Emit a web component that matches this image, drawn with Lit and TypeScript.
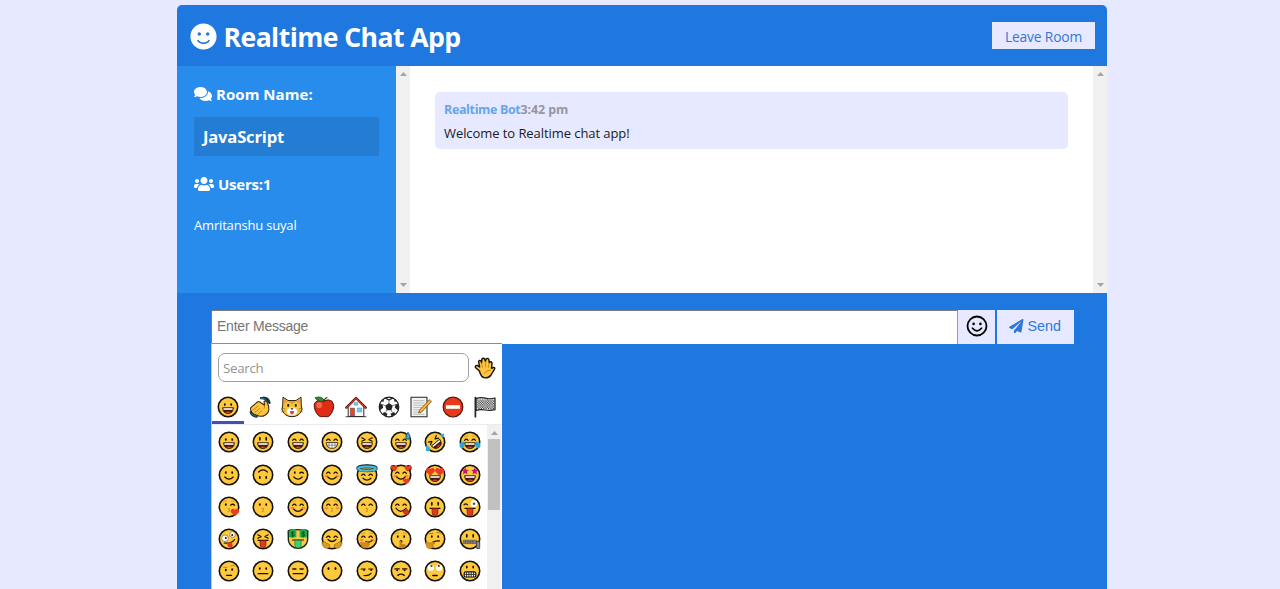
import { LitElement, html, css, svg } from "lit";
import { customElement, property } from "lit/decorators.js";

const K = "#1a1208";
const line = (d: string, color = K, w = 1.2) =>
  svg`<path d=${d} fill="none" stroke=${color} stroke-width=${w} stroke-linecap="round" stroke-linejoin="round"/>`;
const fill = (d: string, color: string, stroke = "none", w = 1) =>
  svg`<path d=${d} fill=${color} stroke=${stroke} stroke-width=${w} stroke-linejoin="round"/>`;
const dot = (x: number, y: number, r: number, color = K) => svg`<circle cx=${x} cy=${y} r=${r} fill=${color}/>`;
const oval = (x: number, y: number, rx: number, ry: number, color = K) =>
  svg`<ellipse cx=${x} cy=${y} rx=${rx} ry=${ry} fill=${color}/>`;

const base = svg`<circle cx="11" cy="11" r="9.7" fill="#fec93c" stroke="#15120c" stroke-width="1.6"/>`;
const eyes = svg`${oval(7.8, 8.6, 0.9, 1.3)}${oval(14.2, 8.6, 0.9, 1.3)}`;
const tall = svg`${oval(7.8, 7.8, 0.9, 2.1)}${oval(14.2, 7.8, 0.9, 2.1)}`;
const happy = line("M5.6 9.3Q7.4 6.9 9.1 9.3M12.9 9.3Q14.6 6.9 16.4 9.3");
const smile = line("M6.8 13Q11 17.2 15.2 13");
const grin = svg`${fill("M5.6 11.8H16.4Q16 17.5 11 17.5T5.6 11.8Z", "#4a1712", K, 0.8)}${fill("M6.4 12.2H15.6V13.8H6.4Z", "#fff")}${fill("M8.2 16.2Q11 14.6 13.8 16.2Q11 17.7 8.2 16.2Z", "#e6432c")}`;
const blush = svg`${oval(5.5, 12.2, 1.9, 1.4, "#f58d4f")}${oval(16.5, 12.2, 1.9, 1.4, "#f58d4f")}`;
const squint = line("M5.8 6.8L9 8.6L5.8 10.2M16.2 6.8L13 8.6L16.2 10.2");
const wink = svg`${oval(7.8, 8.6, 0.9, 1.3)}${line("M12.6 9.2Q14.6 7.3 16.6 9.2")}`;
const tongue = svg`${line("M6 12.4H16")}${fill("M8 12.6H14V16.4Q14 19.6 11 19.6T8 16.4Z", "#e5391f", "#5b1710", 0.6)}`;
const heart = (x: number, y: number, s: number) =>
  svg`<path transform="translate(${x} ${y}) scale(${s})" d="M0 3.2L-3.2 0C-4.2-2-1.5-4 0-1.7C1.5-4 4.2-2 3.2 0Z" fill="#ea3b23"/>`;
const star = (x: number, y: number) =>
  svg`<path transform="translate(${x} ${y})" d="M0-3.6L1-1.2L3.6-1L1.6.8L2.3 3.4L0 2L-2.3 3.4L-1.6.8L-3.6-1L-1-1.2Z" fill="#c4127e"/>`;
const kiss = line("M10.2 12.3Q12.9 12.4 11 13.8Q12.9 14.8 10.2 15.7", "#c07a22", 0.9);
const brows = line("M5.4 5.8Q7 4.3 8.8 4.9M13.2 4.9Q15 4.3 16.6 5.8", "#d08f22", 0.8);

const faces: Record<string, unknown> = {
  grinning: svg`${base}${eyes}${grin}`,
  smiley: svg`${base}${tall}${grin}`,
  smile: svg`${base}${happy}${grin}`,
  beaming: svg`${base}${happy}${fill("M5.3 11.6H16.7Q16.5 17.4 11 17.4T5.3 11.6Z", "#fff", K, 0.8)}${line("M5.8 14.2H16.2M8 12V16.5M11 12V17M14 12V16.5", "#555", 0.6)}`,
  laughing: svg`${base}${squint}${grin}`,
  sweat: svg`${base}${happy}${grin}${fill("M18 1.2Q14.8 5 16 7.3Q18 9.3 20 7.3Q21 5 18 1.2Z", "#31a9d8", "#173846", 0.7)}`,
  rofl: svg`${base}<g transform="rotate(-40 11 11)">${squint}${grin}</g>${fill("M16.2 3.2L20 2.4L20.2 6Q18 7.2 16.2 3.2Z", "#35afd6")}${fill("M2 14.6Q6.4 15.4 6.3 19Q4.4 21 1.8 19.8Z", "#35afd6")}`,
  joy: svg`${base}${brows}${happy}${grin}${fill("M5.2 10.6Q.2 11 .5 15.2Q1.7 18.3 4.6 16.5Q6 14 5.2 10.6ZM16.8 10.6Q21.8 11 21.5 15.2Q20.3 18.3 17.4 16.5Q16 14 16.8 10.6Z", "#2fa5cf")}`,
  slight: svg`${base}${eyes}${smile}`,
  upside: svg`${base}${line("M6.6 8Q11 3.8 15.4 8")}${oval(7.8, 13.4, 0.9, 1.7)}${oval(14.2, 13.4, 0.9, 1.7)}`,
  wink: svg`${base}${brows}${wink}${smile}`,
  blush: svg`${base}${blush}${happy}${smile}`,
  halo: svg`${base}${line("M5.6 11.3Q7.4 8.9 9.1 11.3M12.9 11.3Q14.6 8.9 16.4 11.3")}${line("M7 14.2Q11 18 15 14.2")}<ellipse cx="11" cy="4.2" rx="9" ry="2.2" fill="#fec93c" stroke="#173846" stroke-width="3.6"/><ellipse cx="11" cy="4.6" rx="8.9" ry="2.1" fill="none" stroke="#4cbbd8" stroke-width="2.2"/>`,
  hearts: svg`${base}${blush}${happy}${smile}${dot(3.4, 4, 3)}${dot(18.6, 4, 3)}${heart(4.1, 4.2, 1)}${heart(17.9, 4.2, 1)}${heart(16.4, 17, 1.05)}`,
  heartEyes: svg`${base}${grin}${heart(6.3, 7.6, 1.35)}${heart(15.7, 7.6, 1.35)}`,
  stars: svg`${base}${grin}${star(6.2, 7)}${star(15.8, 7)}`,
  blowing: svg`${base}${brows}${wink}${kiss}${heart(17, 16.2, 1.25)}`,
  kissing: svg`${base}${eyes}${kiss}`,
  relaxed: svg`${base}${brows}${blush}${happy}${line("M6.8 13.2Q11 17.6 15.2 13.2", K, 1.3)}`,
  kissClosed: svg`${base}${brows}${blush}${happy}${kiss}`,
  kissSmile: svg`${base}${happy}${kiss}`,
  yum: svg`${base}${happy}${line("M6 12.2Q10.5 18.5 16.2 12.2")}${fill("M13 14.4L17.7 13.6Q20.4 17.5 17.2 19Q13.6 19 13 14.4Z", "#dd3321", "#6b150e", 0.5)}`,
  tongue: svg`${base}${tall}${tongue}`,
  winkTongue: svg`${base}${line("M5 8.8Q6.8 6.8 8.5 8.8")}<circle cx="15" cy="7.6" r="3.4" fill="#fff"/>${dot(15, 7.7, 1.3, "#296070")}${tongue}`,
  zany: svg`${base}<circle cx="7" cy="10.3" r="3.3" fill="#fff" stroke="#7b5414" stroke-width=".6"/><circle cx="14.5" cy="6.5" r="2.8" fill="#fff" stroke="#7b5414" stroke-width=".6"/>${dot(7.8, 10, 1)}${dot(14.2, 7, 1)}${line("M6.2 15Q12.8 16 16.6 11.6")}${fill("M9 15.2L14 13.9Q15.8 19 12.7 19.8Q9.7 20 9 15.2Z", "#e33a20")}`,
  squintTongue: svg`${base}${squint}${tongue}`,
  money: svg`<path d="M1.2 3Q3.5 1.2 6.3 2.2Q11 1 15.7 2.2Q18.5 1.2 20.8 3L20.6 12.5A9.7 9.2 0 0 1 1.4 12.5Z" fill="#fec93c" stroke="#122b17" stroke-width="1.4"/>${fill("M2 3Q6-.2 9.4 3V9Q5.6 10.6 2 9ZM12.6 3Q16-.2 20 3V9Q16.4 10.6 12.6 9Z", "#19b34d")}${line("M7.2 4.2H4.4V6H7V8H4M5.6 3.2V9M17.8 4.2H15V6H17.6V8H14.6M16.2 3.2V9", "#064c20", 0.8)}${line("M5.5 12H16.5")}${fill("M7.8 12.4H14.2V17Q14 20 11 20T7.8 17Z", "#36d375", "#0a672d", 0.5)}`,
  hug: svg`${base}${happy}${line("M7 11.5Q11 15.5 15 11.5")}${fill("M.8 14.5Q3.5 12.7 6 15.4L8.6 16.5Q9.5 19.8 6 20.5Q1.4 20 .8 14.5ZM21.2 14.5Q18.5 12.7 16 15.4L13.4 16.5Q12.5 19.8 16 20.5Q20.6 20 21.2 14.5Z", "#dd9a22", "#7d5210", 0.5)}`,
  giggle: svg`${base}${blush}${brows}${happy}${line("M10 13.4Q14 15 16 12.5")}${fill("M4.5 14.2L8 15L12.6 12.8L11.6 15.2L13.7 15.7Q12.2 20.2 8 20.2Q4.5 19 4.5 14.2Z", "#d38b1d", "#9d6210", 0.4)}`,
  shush: svg`${base}${brows}${eyes}${oval(11, 13.5, 1.4, 1.5)}${fill("M9.9 13L11.3 12.4L12 15.8L15.8 16.5Q16 20 12 20.4L9.2 19Z", "#c6831d")}`,
  thinking: svg`${base}${eyes}${line("M5.5 5.8L9 5.2M12.8 4.6Q15 3.8 16.5 5.2", "#a4680f", 0.9)}${line("M9 14Q12 12.6 15.5 12.9")}${fill("M1.8 14.3Q3.5 12.8 4.8 15.2L10.7 14.2L10.5 15.8L7.8 16.8L9.8 18Q8.8 20.8 5 20.7Q1.8 19.7 1.8 14.3Z", "#d9941f", "#94610f", 0.5)}`,
  zipper: svg`${base}${tall}${fill("M4.2 12.2H17.7V15.6H4.2Z", "#99948a", "#4b4948", 0.6)}${line("M5 13.9H17M6.5 12.4V15.4M9 12.4V15.4M11.5 12.4V15.4M14 12.4V15.4", "#444", 0.6)}${fill("M17.2 13.5H20.7V20.5H17.8Z", "#8d8d8d", "#333", 0.8)}`,
  raised: svg`${base}${line("M5.5 7.4H9M12.8 6Q15 4.3 16.8 6", "#c98820", 1)}${oval(7.8, 10, 1, 1.2)}${oval(14.2, 9.5, 1, 1.2)}${line("M8.5 15.3H13.6")}`,
  neutral: svg`${base}${eyes}${line("M6.2 13.7H15.8", K, 1.3)}`,
  expressionless: svg`${base}${line("M5.8 9H9M13 9H16.2M6.2 13.7H15.8", K, 1.3)}`,
  noMouth: svg`${base}${oval(7.5, 8.6, 1, 1.5)}${oval(14.5, 8.6, 1, 1.5)}`,
  smirk: svg`${base}${line("M5.2 9H9.2M12.8 9H16.8M8 15.5Q12.8 16 15 13.3")}${dot(8, 10, 1)}${dot(15.2, 10, 1)}`,
  unamused: svg`${base}${line("M5 8.9H9.2M12.6 8.9H16.8M7.8 15.4Q11 12.8 14.2 15.4", K, 1.4)}${dot(7.2, 10.2, 1)}${dot(14.6, 10.2, 1)}`,
  rolling: svg`${base}<circle cx="6.8" cy="7.8" r="3.2" fill="#fff"/><circle cx="15.2" cy="7.8" r="3.2" fill="#fff"/>${dot(7.5, 5.9, 1.1, "#6b4a25")}${dot(14.8, 5.9, 1.1, "#6b4a25")}${line("M8.8 15.6H13.2", K, 1.5)}`,
  grimace: svg`${base}${oval(7.8, 7.1, 0.9, 1.5)}${oval(14.2, 7.1, 0.9, 1.5)}<rect x="5.2" y="11.8" width="11.6" height="5.2" rx="1.5" fill="#fff" stroke="#15120c" stroke-width="1.2"/>${line("M5.5 14.4H16.5M7.6 12V16.8M9.9 12V16.8M12.2 12V16.8M14.5 12V16.8", "#222", 0.9)}`,
  clap: svg`${line("M12 2.2Q16 1.4 19 6.2M14.6 1.6Q19.4 1.6 20.6 7", "#17353f", 2.2)}${line("M1.8 16.2Q3 20 7.6 20.6", "#17353f", 2.4)}${line("M12.4 2.3Q16 1.8 18.6 6", "#2f8296", 0.9)}${line("M2.2 17Q3.6 19.8 7 20.2", "#2f8296", 0.9)}${fill("M1.8 11.6L8.4 6Q9.6 5 10.8 6L15.6 9.2L15 5.6Q17.4 3.6 18.6 7.4Q21 12.4 19 16.4Q15.8 21 10.8 20.2Q6 19.6 3 16.6Q.8 13.4 1.8 11.6Z", "#fec640", "#3d2b0c", 1.1)}${line("M4 14L9 10M5.8 16.6L10.8 12.4M8.6 18.4L12.8 14.8M15.4 9.6Q16.2 11.4 15 12.6", "#b87818", 0.9)}`,
  cat: svg`${fill("M2 1.2L7 4.5H15L20 1.2L20.3 10L21 14Q18.2 20.7 11 20.7T1 14L1.7 10Z", "#fdc23c", "#2b2110", 1)}${fill("M3.1 3.5L6.2 5.6L3.5 8ZM18.9 3.5L15.8 5.6L18.5 8Z", "#f28b54")}${oval(7.2, 9.4, 1, 1.4)}${oval(14.8, 9.4, 1, 1.4)}${oval(11, 15.5, 5.2, 4, "#fff")}${fill("M9.5 12.3H12.5L11 14Z", K)}${fill("M9 15H13Q13 18.5 11 18.5T9 15Z", "#db4b36")}${line("M0 12L4 13M22 12L18 13M.5 16L4 15M21.5 16L18 15M11 5V8M9 5V6.5M13 5V6.5", "#7f5f23", 0.6)}`,
  apple: svg`${fill("M10.8 5.2Q15.5 2.3 19 5.3Q22 9 20 14Q17 21.8 12.8 20.7Q11 20 9.2 20.7Q5 21.5 2 14Q0 8.2 3 5.6Q6.8 3 10.8 5.2Z", "#df2d15", "#571108", 1)}${oval(6.2, 9.2, 2.8, 3, "#f46b51")}${fill("M2 1.8Q8.5-.7 12 4.9Q5 6.6 2 1.8Z", "#318b32", "#174d20", 0.8)}${line("M10.8 5.7Q11.2 2.5 14 1.5", "#493010", 1.1)}`,
  house: svg`${fill("M3.2 10L11 2.5L18.8 10V20.5H3.2Z", "#fff", "#303030", 1)}${line("M1.4 11.6L11 2L20.6 11.6", "#291713", 2.4)}${line("M1.8 11.4L11 2.2L20.2 11.4", "#df321f", 1.4)}${fill("M9.2 6.4H12.8V9.2H9.2ZM12.2 12H16.8V16H12.2Z", "#6fd0e8", "#4795ad", 0.5)}${fill("M5.4 12.2H9.4V20.3H5.4Z", "#e9452e", "#57302a", 0.6)}${line("M1 20.7H21", "#343434", 0.9)}`,
  soccer: svg`<circle cx="11" cy="11" r="9.8" fill="#fff" stroke="#191919" stroke-width="1.2"/>${fill("M11 7L14.8 9.8L13.3 14.2H8.7L7.2 9.8ZM7.8 1.6L11 3.2L14.2 1.6L15.1 2.5L11 4.8L6.9 2.5ZM1.4 8L4.5 8.2L5.2 11.8L2 14.2ZM20.6 8L17.5 8.2L16.8 11.8L20 14.2ZM6 16L9.5 17.7L8.5 20.6L4.4 18.3ZM16 16L12.5 17.7L13.5 20.6L17.6 18.3ZM3 5L6 3L5.5 6ZM19 5L16 3L16.5 6Z", "#252525")}${line("M11 7V4M14.8 9.8L17.5 8.5M13.3 14.2L14.5 17M8.7 14.2L7.5 17M7.2 9.8L4.5 8.5", "#555", 0.7)}`,
  memo: svg`${fill("M1 1.2H17V20.7H1Z", "#f4f4f2", "#272727", 1.1)}${line("M3.6 4.7H14.2M3.6 7H14.2M3.6 9.3H14.2M3.6 11.6H12M3.6 13.9H10M3.6 16.2H10M3.6 18.3H14.2", "#9da0a2", 0.7)}${fill("M9.6 14.2L19.3 3.8L21.4 5.6L11.7 16L8.6 17Z", "#f5b82e", "#6d4610", 0.8)}${line("M19.6 4L21.3 5.4", "#c9a07b", 1.4)}`,
  noEntry: svg`<circle cx="11" cy="11" r="9.8" fill="#e8391b" stroke="#5f160c" stroke-width="1.3"/><rect x="4" y="9.2" width="14" height="3.6" fill="#fff"/>`,
  flag: svg`${fill("M2 2.6Q6.8 1 11.2 2.2T21 2V13.7Q16 15 11.3 14T2 14.4Z", "#e2e2e2", "#1c1c1c", 1.2)}<path d="M3.2 4H20.4M3.2 6.4H20.4M3.2 8.8H20.4M3.2 11.2H20.4" fill="none" stroke="#4a4a4a" stroke-width="1.2" stroke-dasharray="1.2 1.2"/><path d="M4.4 5.2H20.4M4.4 7.6H20.4M4.4 10H20.4M4.4 12.4H20.4" fill="none" stroke="#4a4a4a" stroke-width="1.2" stroke-dasharray="1.2 1.2"/>${line("M1.4 1.5V20.7", "#222", 1.7)}`,
  hand: svg`${fill("M5.4 14L1.4 10.4Q1 8.2 3.2 8.4L5.6 10L4.6 4.6Q5.2 2.6 7 3.8L7.6 5.8L7.8 2.2Q9.2.3 10.7 2L11.4 4.4L12.2 1.8Q14.2.6 15 2.9L15.2 5.6Q17.2 3.6 18 6L17.6 11.4L19.6 10.4Q21.4 10.6 20.4 12.4L17 18Q15 20.9 11 20.9Q7 20.6 5.4 14Z", "#fec640", "#17110a", 1.4)}${line("M7.4 6L8.6 10.4M11.3 4.6L11.8 10M15 6L14.6 10.4M10.3 16.5Q12 13 16.6 13", "#b87818", 0.8)}`,
};

const icons: Record<string, { w: number; d: string }> = {
  smile: { w: 496, d: "M248 8C111 8 0 119 0 256s111 248 248 248 248-111 248-248S385 8 248 8zm80 168c17.7 0 32 14.3 32 32s-14.3 32-32 32-32-14.3-32-32 14.3-32 32-32zm-160 0c17.7 0 32 14.3 32 32s-14.3 32-32 32-32-14.3-32-32 14.3-32 32-32zm194.8 170.2C334.3 380.4 292.5 400 248 400s-86.3-19.6-114.8-53.8c-13.6-16.3 11-36.7 24.6-20.5 22.4 26.9 55.2 42.2 90.2 42.2s67.8-15.4 90.2-42.2c13.4-16.2 38.1 4.2 24.6 20.5z" },
  comments: { w: 576, d: "M416 192c0-88.4-93.1-160-208-160S0 103.6 0 192c0 34.3 14.1 65.9 38 92-13.4 30.2-35.5 54.2-35.8 54.5-2.2 2.3-2.8 5.7-1.5 8.7S4.8 352 8 352c36.6 0 66.9-12.3 88.7-25 32.2 15.7 70.3 25 111.3 25 114.9 0 208-71.6 208-160zm122 220c23.9-26 38-57.7 38-92 0-66.9-53.5-124.2-129.3-148.1.9 6.6 1.3 13.3 1.3 20.1 0 105.9-107.7 192-240 192-10.8 0-21.3-.8-31.7-1.9C207.8 439.6 281.8 480 368 480c41 0 79.1-9.2 111.3-25 21.8 12.7 52.1 25 88.7 25 3.2 0 6.1-1.9 7.3-4.8 1.3-2.9.7-6.3-1.5-8.7-.3-.3-22.4-24.2-35.8-54.5z" },
  users: { w: 640, d: "M96 224c35.3 0 64-28.7 64-64s-28.7-64-64-64-64 28.7-64 64 28.7 64 64 64zm448 0c35.3 0 64-28.7 64-64s-28.7-64-64-64-64 28.7-64 64 28.7 64 64 64zm32 32h-64c-17.6 0-33.5 7.1-45.1 18.6 40.3 22.1 68.9 62 75.1 109.4h66c17.7 0 32-14.3 32-32v-32c0-35.3-28.7-64-64-64zm-256 0c61.9 0 112-50.1 112-112S381.9 32 320 32 208 82.1 208 144s50.1 112 112 112zm76.8 32h-8.3c-20.8 10-43.9 16-68.5 16s-47.6-6-68.5-16h-8.3C179.6 288 128 339.6 128 403.2V432c0 26.5 21.5 48 48 48h288c26.5 0 48-21.5 48-48v-28.8c0-63.6-51.6-115.2-115.2-115.2zm-223.7-13.4C161.5 263.1 145.6 256 128 256H64c-35.3 0-64 28.7-64 64v32c0 17.7 14.3 32 32 32h65.9c6.3-47.4 34.9-87.3 75.2-109.4z" },
  plane: { w: 512, d: "M476 3.2L12.5 270.6c-18.1 10.4-15.8 35.6 2.2 43.2L121 358.4l287.3-253.2c5.5-4.9 13.3 2.6 8.6 8.3L176 407v80.5c0 23.6 28.5 32.9 42.5 15.8L282 426l124.6 52.2c14.2 6 30.4-2.9 33-18.2l72-432C515 7.8 493.3-6.8 476 3.2z" },
};

const tabs = ["grinning", "clap", "cat", "apple", "house", "soccer", "memo", "noEntry", "flag"];
const grid = [
  "grinning", "smiley", "smile", "beaming", "laughing", "sweat", "rofl", "joy",
  "slight", "upside", "wink", "blush", "halo", "hearts", "heartEyes", "stars",
  "blowing", "kissing", "relaxed", "kissClosed", "kissSmile", "yum", "tongue", "winkTongue",
  "zany", "squintTongue", "money", "hug", "giggle", "shush", "thinking", "zipper",
  "raised", "neutral", "expressionless", "noMouth", "smirk", "unamused", "rolling", "grimace",
];

const emoji = (name: string) => html`<svg class="emoji" viewBox="0 0 22 22">${faces[name]}</svg>`;
const icon = (name: string) =>
  html`<svg class="icon ${name}" viewBox="0 0 ${icons[name].w} 512"><path fill="currentColor" d=${icons[name].d} /></svg>`;

@customElement("scroll-track")
class ScrollTrack extends LitElement {
  @property({ type: Boolean }) thumb = false;
  static styles = css`
    :host { display: flex; flex-direction: column; justify-content: space-between; align-items: center; flex: none; width: 14px; background: #f0f0f0; padding: 6px 0; box-sizing: border-box; }
    .arrow { width: 7px; height: 4px; display: block; fill: #a3a3a3; }
    .thumb { width: 12px; height: 71px; background: #c1c1c1; margin: 4px 0 auto; }
  `;
  render() {
    return html`<svg class="arrow" viewBox="0 0 7 4"><path d="M0 4L3.5 0L7 4Z" /></svg>
      ${this.thumb
        ? html`<div class="thumb"></div>`
        : html`<svg class="arrow" viewBox="0 0 7 4"><path d="M0 0L3.5 4L7 0Z" /></svg>`}`;
  }
}

@customElement("emoji-picker")
class EmojiPicker extends LitElement {
  static styles = css`
    :host { display: block; box-sizing: border-box; width: 291px; height: 290px; background: #fff; border-left: 1px solid #c5c9d6; border-top: 1px solid #8a8d94; font-family: "Open Sans", sans-serif; }
    .emoji { display: block; width: 22px; height: 22px; }
    .top { display: flex; align-items: center; padding: 9px 6px 0 6px; }
    .search { box-sizing: border-box; width: 251px; height: 29px; border: 1px solid #a0a0a0; border-radius: 7px; padding: 0 4px; margin-right: 5px; font: 13.3px/28px "Open Sans", sans-serif; letter-spacing: -0.3px; color: #929292; }
    .tabs { display: grid; grid-template-columns: repeat(9, 32.1px); height: 42px; border-bottom: 1px solid #e9ebf0; box-sizing: content-box; }
    .tab { display: flex; justify-content: center; padding-top: 14px; box-sizing: border-box; height: 42px; }
    .active { border-bottom: 3px solid #3f51b5; }
    .body { display: flex; height: 165px; }
    .grid { display: grid; grid-template-columns: repeat(8, 34.4px); grid-auto-rows: 32.15px; width: 275px; height: 165px; overflow: hidden; align-items: start; padding: 6.4px 0 0 6px; box-sizing: border-box; }
  `;
  render() {
    return html`<div class="top"><div class="search">Search</div>${emoji("hand")}</div>
      <div class="tabs">${tabs.map((t, i) => html`<div class="tab ${i === 0 ? "active" : ""}">${emoji(t)}</div>`)}</div>
      <div class="body"><div class="grid">${grid.map((f) => emoji(f))}</div><scroll-track thumb></scroll-track></div>`;
  }
}

@customElement("app-root")
class AppRoot extends LitElement {
  static styles = css`
    :host { display: block; height: 589px; overflow: hidden; background: #e6e9ff; box-sizing: border-box; padding: 5px 172.6px 0 177px; font-family: "Open Sans", sans-serif; }
    .icon { display: inline-block; flex: none; }
    .chat { display: flex; flex-direction: column; width: 930px; height: 584px; border-radius: 5px 5px 0 0; overflow: hidden; background: #1f78df; }
    header { display: flex; justify-content: space-between; align-items: center; height: 61px; padding: 0 12px 0 12.5px; box-sizing: border-box; color: #fff; flex: none; }
    h1 { display: flex; align-items: center; gap: 7px; margin: 0; font-size: 26.6px; line-height: 36px; font-weight: 700; letter-spacing: -0.57px; padding-top: 2px; }
    .smile { width: 27px; height: 27px; }
    .leave { background: #e6e9ff; color: #3577d8; width: 103px; height: 27px; line-height: 29px; text-align: center; font-size: 13.8px; letter-spacing: -0.15px; }
    .main { display: flex; height: 227px; flex: none; background: #fff; }
    aside { width: 219px; flex: none; background: #288cec; color: #fff; padding: 16px 17px 0; box-sizing: border-box; }
    h3 { display: flex; align-items: center; gap: 4px; margin: 0; height: 24px; font-size: 15px; line-height: 25px; font-weight: 700; letter-spacing: 0.05px; }
    h3.count { letter-spacing: -0.25px; }
    .comments { width: 18px; height: 16px; }
    .users { width: 20px; height: 16px; }
    h2 { margin: 11px 0 16px; height: 39px; line-height: 40px; padding-left: 9px; font-size: 16.6px; font-weight: 700; letter-spacing: -0.2px; background: #247cd3; }
    .user { margin-top: 19px; font-size: 13px; line-height: 20px; letter-spacing: -0.18px; }
    .messages { flex: 1; padding: 26px 25px; }
    .message { height: 57px; box-sizing: border-box; border-radius: 5px; background: #e6e9ff; padding: 8px 9px; font-size: 13px; line-height: 20px; color: #1b1b22; }
    .meta { font-size: 12.5px; font-weight: 700; line-height: 19px; color: #9796a4; letter-spacing: -0.1px; }
    .name { color: #66a5ea; letter-spacing: -0.36px; }
    .text { margin-top: 4px; letter-spacing: -0.07px; }
    .form { display: flex; height: 34px; margin: 17px 33px 0 34px; flex: none; }
    .input { box-sizing: border-box; width: 747px; background: #fff; border: 1px solid #777c85; border-right-color: #99a; border-bottom: 0; padding-left: 5px; color: #757575; font: 14px/31px "Liberation Sans", sans-serif; letter-spacing: -0.23px; }
    .pick { width: 37px; background: #e6e9ff; display: flex; align-items: center; justify-content: center; margin-right: 2px; }
    .face { width: 22px; height: 22px; margin-top: -2px; }
    .send { width: 77px; background: #e6e9ff; color: #2b78db; display: flex; align-items: center; justify-content: center; gap: 4px; font: 14.3px/32px "Liberation Sans", sans-serif; padding: 0 1px 2px 0; box-sizing: border-box; }
    .plane { width: 14.5px; height: 14.5px; }
    emoji-picker { margin-left: 34px; margin-top: -1px; }
  `;
  render() {
    return html`<div class="chat">
      <header><h1>${icon("smile")}<span>Realtime Chat App</span></h1><div class="leave">Leave Room</div></header>
      <div class="main">
        <aside>
          <h3>${icon("comments")}<span>Room Name:</span></h3>
          <h2>JavaScript</h2>
          <h3 class="count">${icon("users")}<span>Users:1</span></h3>
          <div class="user">Amritanshu suyal</div>
        </aside>
        <scroll-track></scroll-track>
        <div class="messages"><div class="message">
          <div class="meta"><span class="name">Realtime Bot</span><span>3:42 pm</span></div>
          <div class="text">Welcome to Realtime chat app!</div>
        </div></div>
        <scroll-track></scroll-track>
      </div>
      <div class="form">
        <div class="input">Enter Message</div>
        <div class="pick"><svg class="face" viewBox="0 0 22 22"><circle cx="11" cy="11" r="9.5" fill="none" stroke="#000" stroke-width="1.8"/>${dot(7.6, 8.9, 1.3, "#000")}${dot(14.4, 8.9, 1.3, "#000")}${line("M6.5 13.2Q11 18.4 15.5 13.2", "#000", 1.7)}</svg></div>
        <div class="send">${icon("plane")}<span>Send</span></div>
      </div>
      <emoji-picker></emoji-picker>
    </div>`;
  }
}
